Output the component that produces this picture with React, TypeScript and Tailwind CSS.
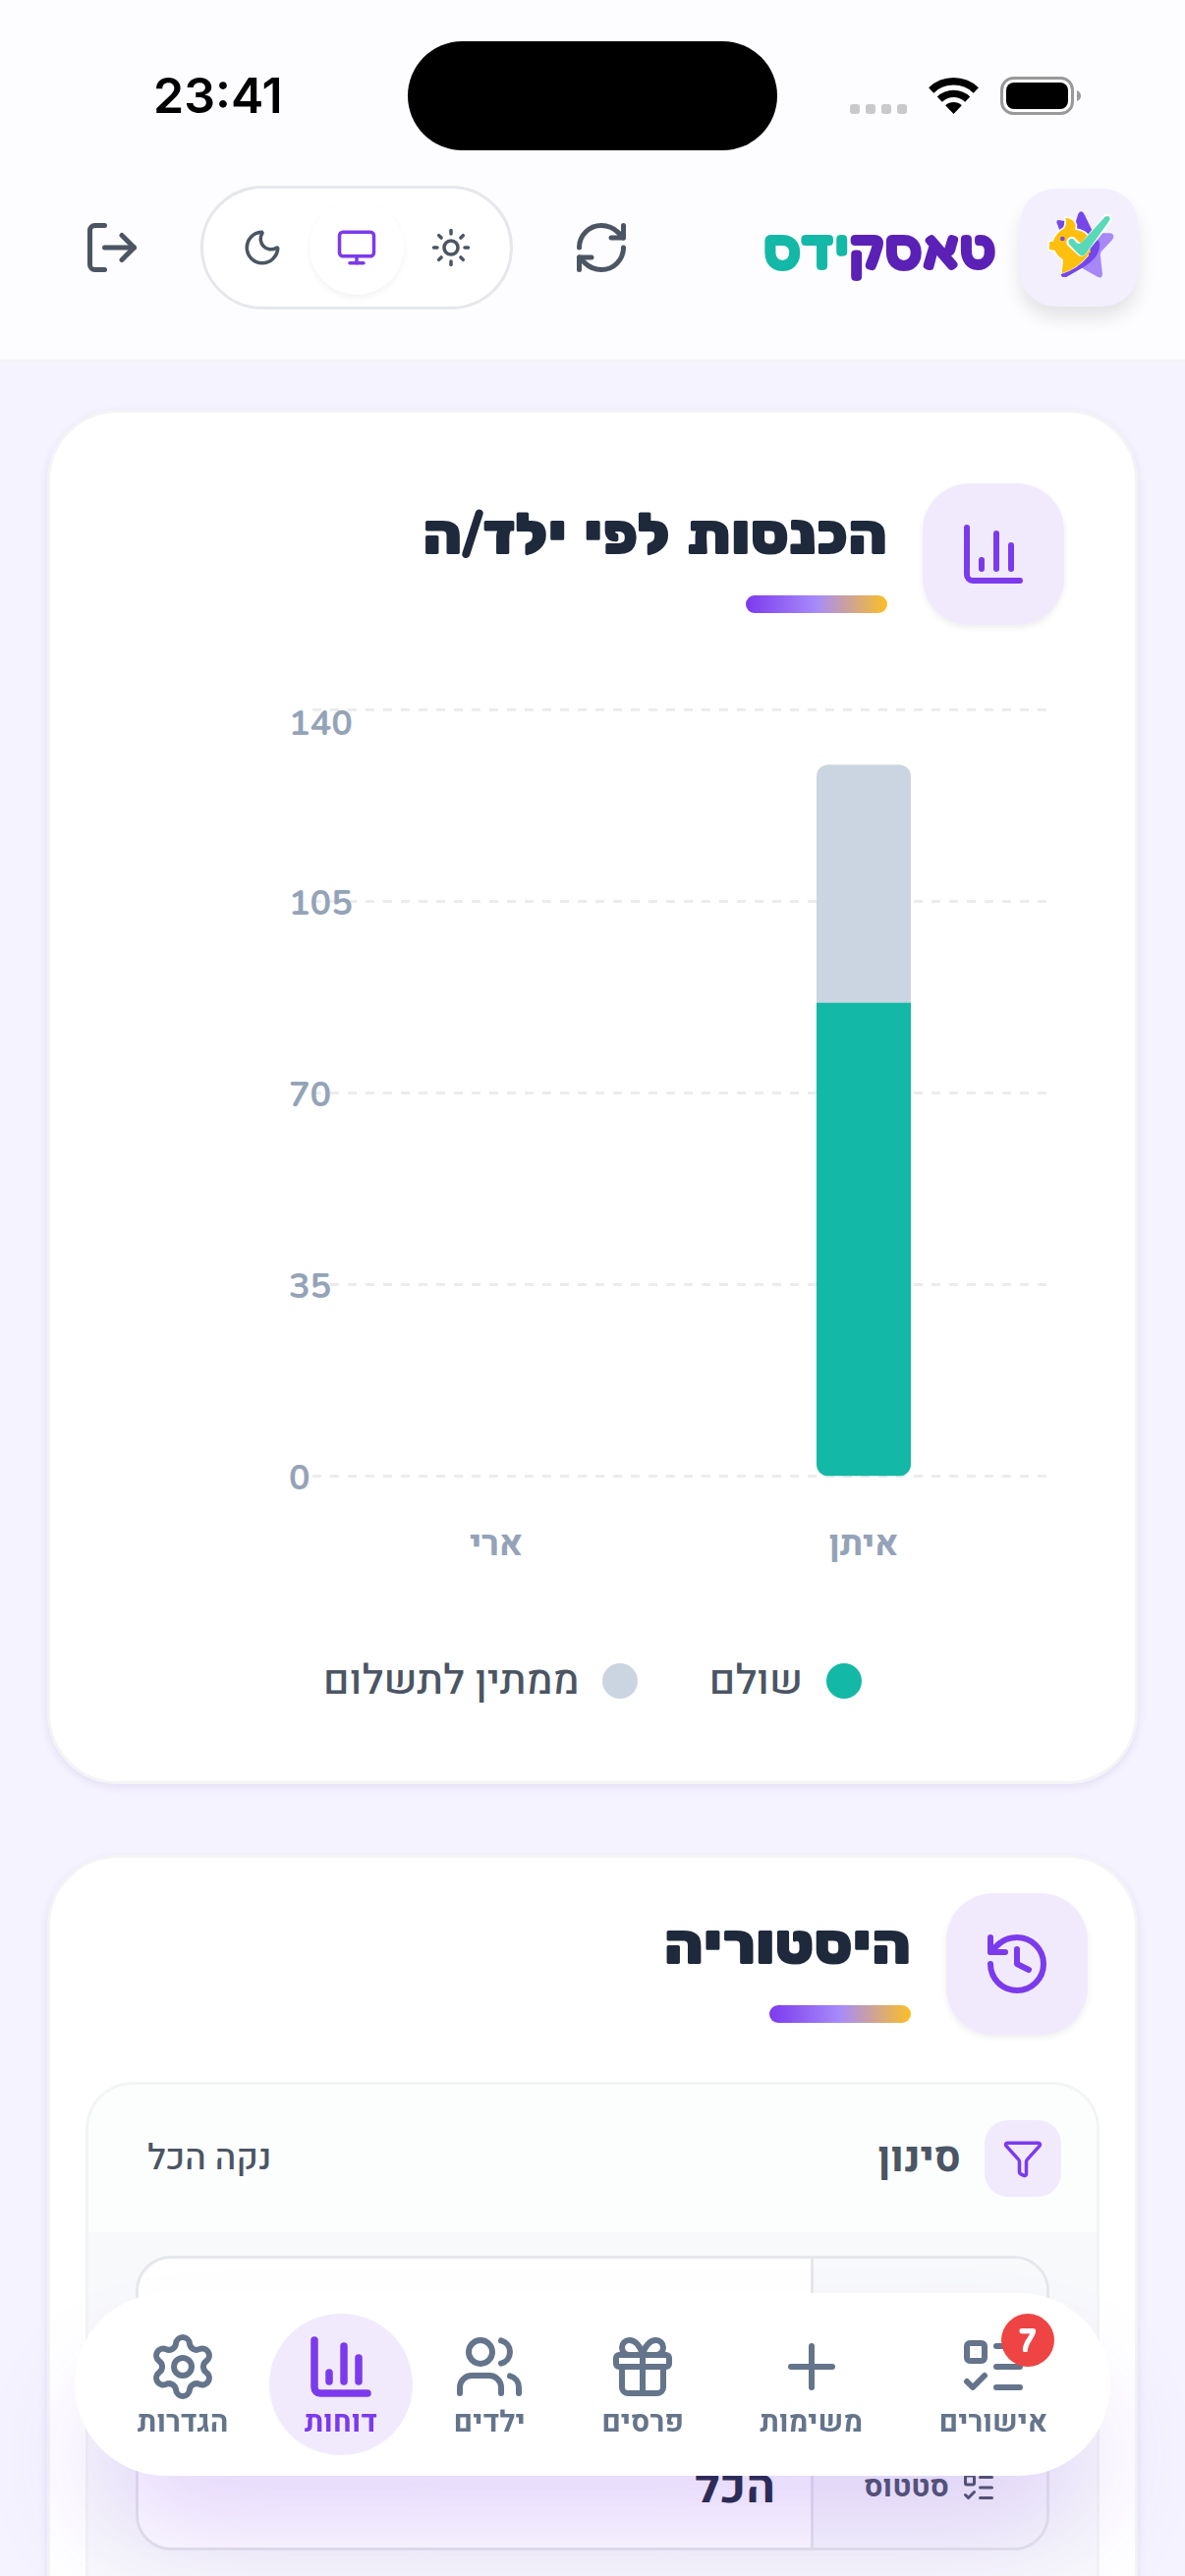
import React from "react";
import {
  ChartColumn,
  Funnel,
  Gift,
  History,
  ListTodo,
  LogOut,
  Monitor,
  Moon,
  Plus,
  RefreshCw,
  Settings,
  Sun,
  Users,
  type LucideIcon,
} from "lucide-react";

interface INavItem {
  label: string;
  icon: LucideIcon;
  active?: boolean;
  badge?: number;
}

interface IChildIncome {
  name: string;
  paid: number;
  pending: number;
}

const navItems: INavItem[] = [
  { label: "אישורים", icon: ListTodo, badge: 7 },
  { label: "משימות", icon: Plus },
  { label: "פרסים", icon: Gift },
  { label: "ילדים", icon: Users },
  { label: "דוחות", icon: ChartColumn, active: true },
  { label: "הגדרות", icon: Settings },
];

const incomes: IChildIncome[] = [
  { name: "ארי", paid: 0, pending: 0 },
  { name: "איתן", paid: 86.5, pending: 43.5 },
];

const themes = [
  { id: "light", label: "בהיר", icon: Sun },
  { id: "system", label: "מערכת", icon: Monitor },
  { id: "dark", label: "כהה", icon: Moon },
];

function StatusBar() {
  return (
    <div dir="ltr" className="grid h-[177px] grid-cols-[1fr_376px_1fr] items-center pt-[18px]">
      <span className="pl-[156px] font-[Inter] text-[50px] font-semibold text-black">23:41</span>
      <div className="h-[111px] rounded-full bg-black" />
      <div className="flex justify-end pr-[106px]">
        <svg width="235" height="39" viewBox="0 0 235 39" fill="none">
          {[0, 16, 32, 48].map((x) => (
            <rect key={x} x={x} y="28" width="10" height="10" rx="3" fill="#c9c9cb" />
          ))}
          <path d="M82.7 13.9A33.2 33.2 0 0 1 128.3 13.9" stroke="#000" strokeWidth="7.5" />
          <path d="M91.3 23.1A20.6 20.6 0 0 1 119.7 23.1" stroke="#000" strokeWidth="7.3" />
          <path d="M97.2 29.3A12 12 0 0 1 113.8 29.3L105.5 38Z" fill="#000" />
          <rect x="154.5" y="1.5" width="72" height="36" rx="12" stroke="#999" strokeWidth="3" />
          <rect x="159" y="6" width="63" height="27" rx="8" fill="#000" />
          <path d="M231 14Q235 15.5 235 19.5Q235 23.500 231 25Z" fill="#999" />
        </svg>
      </div>
    </div>
  );
}

function Logo() {
  return (
    <div className="flex items-center gap-6">
      <div className="size-[120px] rounded-[36px] bg-[#f3effd] shadow-[0_12px_18px_rgba(0,0,0,0.1)]">
        <svg viewBox="24 21 360 360" className="size-full" fill="none">
          <path
            d="M262 157L300 157Q316 162 306 177L273 212Q268 218 270 230L276 282Q275 297 261 290L214 264L240 200Z"
            fill="#a688f7"
          />
          <path d="M184 156L202 98Q211 84 220 98L244 148L214 190Z" fill="#7547e8" />
          <path d="M136 124Q136 115 146 118L162 120L158 142L145 148Z" fill="#7547e8" />
          <path d="M150 282L262 176Q278 222 222 258L166 290Q150 294 150 282Z" fill="#7547e8" />
          <path
            d="M163 110Q190 112 194 133L192 147Q214 148 230 164L262 184Q250 224 216 250Q186 272 154 278L156 238Q138 226 130 209L114 207L114 184L126 182Q132 158 160 142Q168 128 163 110Z"
            fill="#fff"
            stroke="#fff"
            strokeWidth="10"
            strokeLinejoin="round"
          />
          <path d="M222 166L266 180Q276 224 222 258L166 290Q150 294 150 282Q200 268 234 226Z" fill="#7547e8" />
          <path
            d="M163 110Q190 112 194 133L192 147Q214 148 230 164L240 214Q204 266 152 280L156 238Q138 226 130 209L114 207L114 184L126 182Q132 158 160 142Q168 128 163 110Z"
            fill="#ffbf0f"
          />
          <circle cx="154" cy="174" r="7" fill="#7547e8" />
          <path d="M182 184L212 212L290 114" stroke="#fff" strokeWidth="32" strokeLinecap="round" strokeLinejoin="round" />
          <path
            d="M174 190Q168 176 182 173Q188 173 196 186Q204 192 212 186L282 109Q292 101 298 109Q301 114 294 123L228 216Q216 234 202 220Z"
            fill="#58d9b8"
          />
        </svg>
      </div>
      <h1 className="font-[Fredoka,Heebo,'Open_Sans',sans-serif] text-[60px] leading-none font-bold text-[#5b21b6]">
        טאסק<span className="text-[#14b8a6]">ידס</span>
      </h1>
    </div>
  );
}

function ThemeToggle() {
  const [theme, setTheme] = React.useState("system");

  return (
    <div className="flex rounded-full border-[3px] border-[#e5e7eb] bg-white p-3">
      {themes.map(({ id, label, icon: Icon }) => (
        <button
          key={id}
          type="button"
          aria-label={label}
          onClick={() => setTheme(id)}
          className={
            theme === id
              ? "grid size-24 place-items-center rounded-full bg-white text-[#7c3aed] shadow-[0_3px_6px_rgba(0,0,0,0.05)]"
              : "grid size-24 place-items-center rounded-full text-[#4b5563]"
          }
        >
          <Icon size={42} />
        </button>
      ))}
    </div>
  );
}

function SectionHeader({ title, icon: Icon }: { title: string; icon: LucideIcon }) {
  return (
    <div className="flex items-center gap-9">
      <div className="grid size-36 place-items-center rounded-[48px] bg-[#f1eafd] text-[#7c3aed] shadow-[0_3px_6px_rgba(0,0,0,0.07)]">
        <Icon size={72} />
      </div>
      <div>
        <h2 className="font-[Nunito,Rubik,'Open_Sans',sans-serif] text-[60px] leading-[80px] font-black text-[#1e293b]">
          {title}
        </h2>
        <div className="mt-[22px] h-[18px] w-36 rounded-full bg-[linear-gradient(90deg,#7c3aed,#a78bfa,#fbbf24)]" />
      </div>
    </div>
  );
}

function IncomeChart() {
  const max = 140;
  const bottom = 818.5;
  const toY = (value: number) => bottom - (value / max) * 780;

  return (
    <svg viewBox="0 0 960 945" direction="ltr" className="mt-12 w-full font-[Nunito,Heebo,'Open_Sans',sans-serif]">
      {[0, 35, 70, 105, 140].map((tick) => (
        <g key={tick}>
          <line x1="195" x2="942" y1={toY(tick)} y2={toY(tick)} stroke="#ececec" strokeWidth="3" strokeDasharray="9 9" />
          <text
            x="171"
            y={tick === max ? 64 : toY(tick) + 13}
            className="fill-[#94a3b8] text-[36px] font-bold"
          >
            {tick}
          </text>
        </g>
      ))}
      {incomes.map((child, i) => {
        const center = 382 + i * 374;
        const total = child.paid + child.pending;
        return (
          <g key={child.name}>
            {total > 0 && (
              <>
                <clipPath id={`bar-${i}`}>
                  <rect x={center - 48} y={toY(total)} width="96" height={bottom - toY(total)} rx="12" />
                </clipPath>
                <g clipPath={`url(#bar-${i})`}>
                  <rect x={center - 48} y={toY(total)} width="96" height={toY(child.paid) - toY(total)} fill="#cbd5e1" />
                  <rect x={center - 48} y={toY(child.paid)} width="96" height={bottom - toY(child.paid)} fill="#14b8a6" />
                </g>
              </>
            )}
            <text
              x={center}
              y="899"
              textAnchor="middle"
              className="fill-[#94a3b8] text-[36px] font-bold"
            >
              {child.name}
            </text>
          </g>
        );
      })}
    </svg>
  );
}

function LegendItem({ label, dot }: { label: string; dot: string }) {
  return (
    <li className="flex items-center gap-6">
      <span className={`size-9 rounded-full ${dot}`} />
      {label}
    </li>
  );
}

function Filters() {
  return (
    <div className="mt-12 rounded-t-[48px] border-[3px] border-b-0 border-gray-100 bg-[#f8f9fb]">
      <div className="flex items-center justify-between rounded-t-[45px] bg-[#fcfefd] p-9">
        <div className="flex items-center gap-6">
          <div className="grid size-[78px] place-items-center rounded-3xl bg-[#f1eafd] text-[#7c3aed]">
            <Funnel size={42} />
          </div>
          <h3 className="text-[42px] leading-[63px] font-bold text-[#4b5563]">סינון</h3>
        </div>
        <button type="button" className="px-6 text-[36px] leading-[54px] font-medium text-[#4b5563]">
          נקה הכל
        </button>
      </div>
      <div className="px-12 pt-6 pb-12">
        <div className="overflow-hidden rounded-[36px] border-[3px] border-[#e5e7eb] bg-white">
          <div className="grid h-[172px] grid-cols-[240px_1fr]">
            <div className="border-l-[3px] border-[#e5e7eb] bg-[#f8f9fb]" />
          </div>
          <div className="grid h-[122px] grid-cols-[240px_1fr]">
            <label
              htmlFor="status"
              className="flex items-center justify-center gap-3 border-l-[3px] border-[#e5e7eb] bg-[#f8f9fb] text-[30px] font-bold text-[#4b5563]"
            >
              <ListTodo size={36} />
              סטטוס
            </label>
            <select
              id="status"
              className="w-full appearance-none bg-transparent px-9 text-[48px] leading-[60px] font-bold text-[#1e293b]"
            >
              <option>הכל</option>
            </select>
          </div>
        </div>
      </div>
    </div>
  );
}

function BottomNav() {
  return (
    <nav className="fixed inset-x-[76px] bottom-[102px] flex h-[186px] items-center justify-between rounded-full bg-white px-7 shadow-[0_72px_120px_-24px_rgba(124,58,237,0.24)]">
      {navItems.map(({ label, icon: Icon, active, badge }) => (
        <a
          key={label}
          href="#"
          className={
            active
              ? "relative flex h-36 min-w-36 flex-col items-center rounded-full bg-[#f1eafd] px-9 pt-[18px] text-[30px] leading-[42px] font-bold text-[#7c3aed]"
              : "relative flex h-36 min-w-36 flex-col items-center rounded-full px-9 pt-[18px] text-[30px] leading-[42px] font-bold text-[#64748b]"
          }
        >
          <Icon size={72} strokeWidth={active ? 2.5 : 2} className="shrink-0" />
          {label}
          {badge && (
            <span className="absolute top-0 left-1/2 ml-2 grid size-[54px] place-items-center rounded-full bg-[#ef4444] font-[Fredoka,sans-serif] text-[33px] leading-none font-semibold text-white">
              {badge}
            </span>
          )}
        </a>
      ))}
    </nav>
  );
}

export default function App() {
  return (
    <div
      dir="rtl"
      className="flex h-screen flex-col overflow-hidden bg-[#f5f3ff] font-[Heebo,'Open_Sans','Liberation_Sans',sans-serif]"
    >
      <header className="border-b-[3px] border-gray-100 bg-[#fdfdff]">
        <StatusBar />
        <div className="flex items-center justify-between px-12 pt-3 pb-[51px]">
          <Logo />
          <div className="flex items-center gap-6 text-[#4b5563]">
            <button type="button" aria-label="רענון" className="-my-1 grid size-[132px] place-items-center">
              <RefreshCw size={60} />
            </button>
            <ThemeToggle />
            <button type="button" aria-label="יציאה" className="-my-1 grid size-[132px] place-items-center">
              <LogOut size={60} />
            </button>
          </div>
        </div>
      </header>

      <main className="flex min-h-0 flex-1 flex-col gap-[72px] px-12 pt-12">
        <section className="shrink-0 rounded-[72px] border-[3px] border-gray-100 bg-white p-[72px] shadow-[0_3px_9px_rgba(76,29,149,0.1)]">
          <SectionHeader title="הכנסות לפי ילד/ה" icon={ChartColumn} />
          <IncomeChart />
          <ul className="mt-12 flex justify-center gap-[72px] pt-1 text-[42px] leading-[60px] font-medium text-[#4b5563]">
            <LegendItem label="שולם" dot="bg-[#14b8a6]" />
            <LegendItem label="ממתין לתשלום" dot="bg-[#cbd5e1]" />
          </ul>
        </section>

        <section className="min-h-[900px] shrink-0 rounded-[72px] border-[3px] border-gray-100 bg-white p-9 shadow-[0_3px_9px_rgba(76,29,149,0.1)]">
          <div className="px-3">
            <SectionHeader title="היסטוריה" icon={History} />
          </div>
          <Filters />
        </section>
      </main>

      <BottomNav />
    </div>
  );
}
